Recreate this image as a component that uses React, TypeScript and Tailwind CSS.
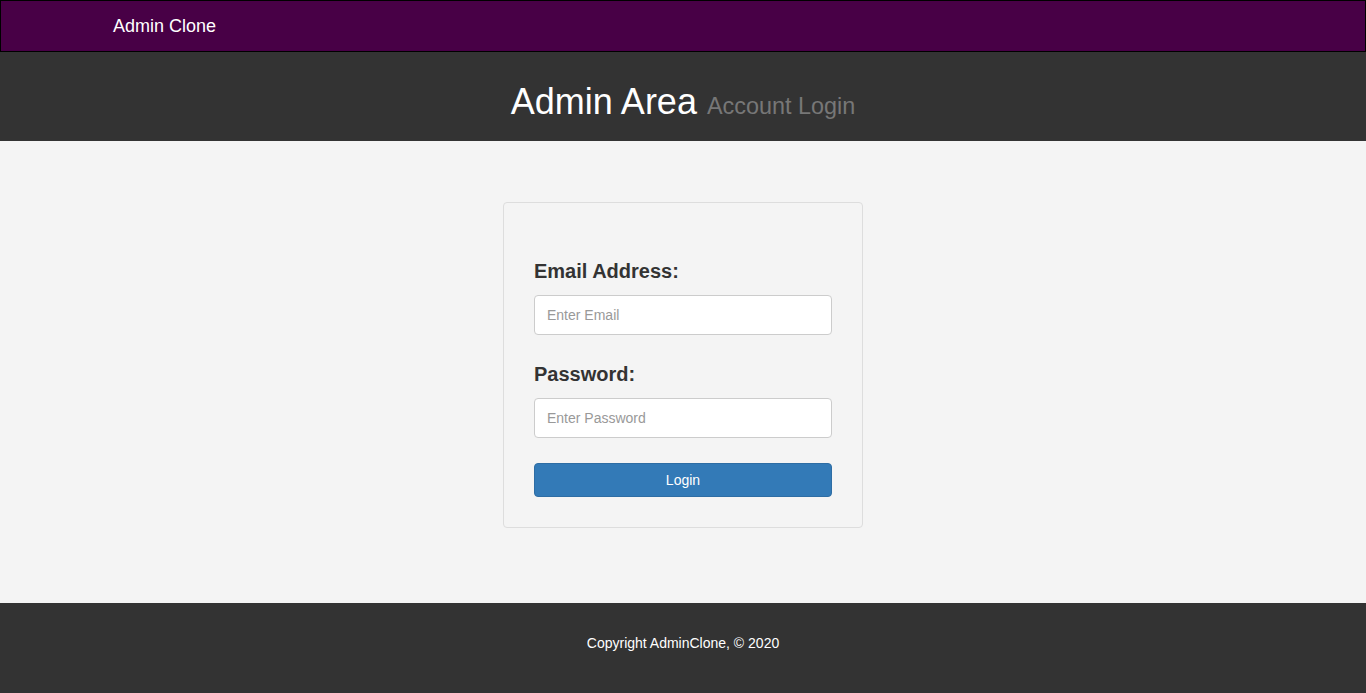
import React from "react"

const font = { fontFamily: '"Liberation Sans", Arial, sans-serif' }

const Field = ({ label, placeholder, type, first }: { label: string; placeholder: string; type: string; first?: boolean }) => (
  <div className={first ? "" : "mt-[28px]"}>
    <label className="block text-[20px] leading-[22px] font-bold text-[#333]">{label}</label>
    <input
      type={type}
      placeholder={placeholder}
      className="mt-[13px] block h-[40px] w-full rounded-[4px] border border-[#ccc] bg-white px-[12px] text-[14px] text-[#555] placeholder:text-[#999] outline-none"
    />
  </div>
)

export default function App() {
  return (
    <div className="flex min-h-[693px] flex-col" style={font}>
      <nav className="h-[52px] border border-black bg-[#480046]">
        <div className="mx-auto flex h-full w-[1170px] items-center px-[15px]">
          <span className="text-[18px] leading-[20px] text-white">Admin Clone</span>
        </div>
      </nav>
      <header className="flex h-[89px] items-center justify-center bg-[#333]">
        <h1 className="pt-[14px] text-[36px] leading-[40px] text-white">
          Admin Area <small className="text-[23.4px] text-[#777]">Account Login</small>
        </h1>
      </header>
      <main className="flex justify-center bg-[#f4f4f4] pt-[61px] pb-[75px]">
        <div className="w-[360px] rounded-[4px] border border-[#ddd] bg-[#f4f4f4] px-[30px] pt-[57px] pb-[30px]">
          <form onSubmit={(e) => e.preventDefault()}>
            <Field first label="Email Address:" placeholder="Enter Email" type="email" />
            <Field label="Password:" placeholder="Enter Password" type="password" />
            <button
              type="submit"
              className="mt-[25px] block h-[34px] w-full rounded-[4px] border border-[#2e6da4] bg-[#337ab7] text-[14px] text-white"
            >
              Login
            </button>
          </form>
        </div>
      </main>
      <footer className="flex h-[90px] justify-center bg-[#333] pt-[30px]">
        <p className="text-[14px] leading-[20px] text-white">Copyright AdminClone, &copy; 2020</p>
      </footer>
    </div>
  )
}
